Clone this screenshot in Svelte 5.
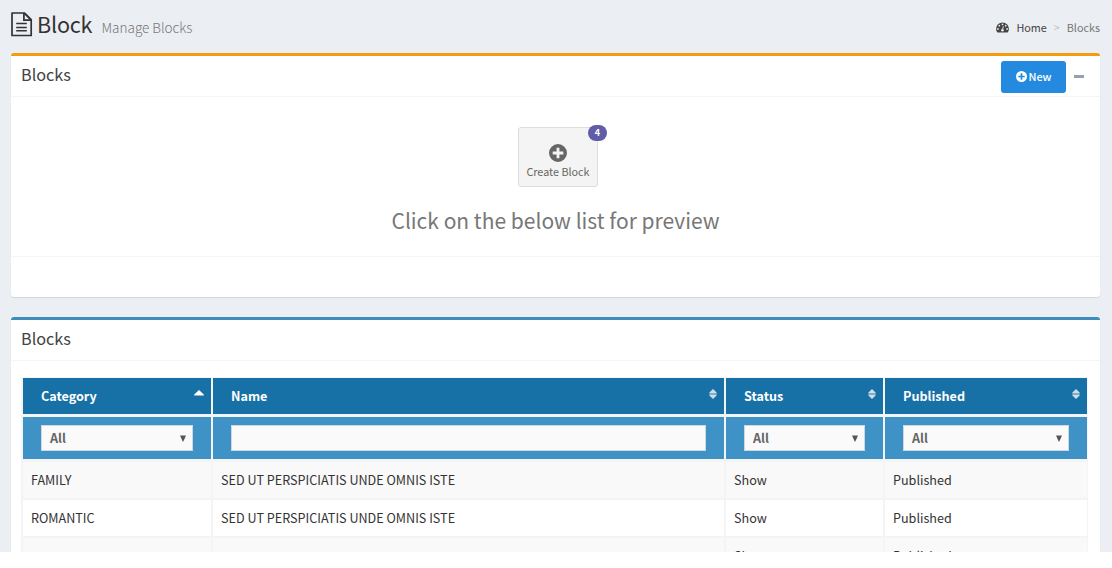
<script>
  const columns = [
    { label: 'Category', sort: 'asc', filter: 'select' },
    { label: 'Name', sort: 'both', filter: 'text' },
    { label: 'Status', sort: 'both', filter: 'select' },
    { label: 'Published', sort: 'both', filter: 'select' }
  ];
  const rows = [
    ['FAMILY', 'SED UT PERSPICIATIS UNDE OMNIS ISTE', 'Show', 'Published'],
    ['ROMANTIC', 'SED UT PERSPICIATIS UNDE OMNIS ISTE', 'Show', 'Published'],
    ['', '', 'Show', 'Published']
  ];
</script>

{#snippet plusCircle(size)}
  <svg width={size} height={size} viewBox="0 0 18 18" aria-hidden="true">
    <path fill="currentColor" fill-rule="evenodd" d="M9 0a9 9 0 1 0 0 18A9 9 0 0 0 9 0zM7.6 3.7h2.8v3.9h3.9v2.8h-3.9v3.9H7.6v-3.9H3.7V7.6h3.9z" />
  </svg>
{/snippet}

<div class="page">
  <header class="top">
    <h1>
      <svg class="doc" width="22" height="25" viewBox="0 0 22 25" fill="none" stroke="#333" stroke-width="1.7">
        <path d="M1 1h12.6L20.2 7.6V23.5H1z" stroke-linejoin="round" />
        <path d="M12.9 1v7.2h7.2" stroke-width="1.7" />
        <path d="M13.5 1.5l6 6" stroke-width="1.6" />
        <path d="M5.2 11.5h10.6M5.2 15.5h10.6M5.2 18.8h10.6" stroke-width="1.4" />
      </svg>
      <span class="title">Block</span>
      <small>Manage Blocks</small>
    </h1>
    <nav>
      <svg width="13" height="11" viewBox="0 0 13 11">
        <path fill="#444" d="M6.5.4A6.4 6.4 0 0 0 .1 6.8c0 1.2.3 2.3.9 3.3.1.2.3.3.5.3h10c.2 0 .4-.1.5-.3.6-1 .9-2.1.9-3.3A6.4 6.4 0 0 0 6.5.4z" />
        <g fill="#ebeef3"><circle cx="1.9" cy="6.9" r=".9" /><circle cx="3.3" cy="3.7" r=".9" /><circle cx="6.5" cy="2.3" r=".9" /><circle cx="9.7" cy="3.7" r=".9" /><circle cx="11.1" cy="6.9" r=".9" /></g>
        <path d="M7.4 4.2L6.6 7.6" stroke="#ebeef3" stroke-width=".9" />
        <circle cx="6.4" cy="8.3" r="1.3" fill="#ebeef3" />
      </svg>
      <span class="home">Home</span>
      <span class="sep">&gt;</span>
      <span class="here">Blocks</span>
    </nav>
  </header>

  <section class="box warning">
    <div class="box-header">
      <h3>Blocks</h3>
      <div class="tools">
        <button class="new">{@render plusCircle(11)}<span>New</span></button>
        <span class="minus"></span>
      </div>
    </div>
    <div class="intro">
      <button class="app">
        <span class="badge">4</span>
        {@render plusCircle(18)}
        <span class="app-label">Create Block</span>
      </button>
      <p>Click on the below list for preview</p>
    </div>
    <div class="box-footer"></div>
  </section>

  <section class="box primary">
    <div class="box-header"><h3>Blocks</h3></div>
    <div class="table">
      {#each columns as c}
        <div class="th">
          <span>{c.label}</span>
          {#if c.sort === 'asc'}
            <svg class="asc" width="10" height="6" viewBox="0 0 10 6"><path fill="#fff" d="M5 0l4.8 4.6V5.5H.2v-.9z" /></svg>
          {:else}
            <svg class="both" width="8" height="10" viewBox="0 0 8 10"><path fill="#d0dde6" d="M4 0l3.6 3.6v.9H.4v-.9z M.4 5.5h7.2v.9L4 10 .4 6.4z" /><path fill="#8fb4cd" d="M.4 4.5h7.2v1H.4z" /></svg>
          {/if}
        </div>
      {/each}
      {#each columns as c}
        <div class="filter">
          <div class="field">
            {#if c.filter === 'select'}
              <span>All</span>
              <svg width="6" height="7" viewBox="0 0 6 7"><path fill="#555" d="M0 .5h6L3.3 6.5h-.6z" /></svg>
            {/if}
          </div>
        </div>
      {/each}
      {#each rows as row, i}
        {#each row as cell}
          <div class="td" class:odd={i % 2 === 0}><span>{cell}</span></div>
        {/each}
      {/each}
    </div>
  </section>
</div>

<style>
  :global(body) { margin: 0; background: #fff; }
  .page, .page * { box-sizing: border-box; }
  .page {
    width: 1112px; height: 552px; overflow: hidden; padding: 0 12px 0 11px;
    background: #ebeef3; color: #333; font: 12.6px/20px "Noto Sans CJK SC", sans-serif;
  }
  h1, h3, p { margin: 0; font-weight: 400; }
  button { font: inherit; margin: 0; }
  svg { display: block; flex: none; }
  .top { height: 53px; display: flex; justify-content: space-between; }
  h1 { display: flex; align-items: flex-start; line-height: 30px; }
  .doc { margin-top: 12px; }
  .title { font-size: 21.6px; letter-spacing: -.2px; width: 55px; margin: 9px 0 0 4px; }
  small { font-size: 13.5px; font-weight: 300; color: #777; margin: 12px 0 0 9.5px; }
  nav { display: flex; align-items: center; height: 20px; margin-top: 17px; font-size: 10.8px; color: #444; }
  nav svg { margin-top: 1px; }
  .home { margin-left: 7px; }
  .sep { margin: 0 7px; color: #bbb; font-size: 10.8px; }
  .here { color: #777; }
  .box { width: 1089px; background: #fff; border-top: 3px solid; border-radius: 3px; box-shadow: 0 1px 1px rgba(0,0,0,.1); }
  .warning { height: 244px; border-top-color: #f39c12; margin-bottom: 20px; }
  .primary { height: 300px; border-top-color: #3c8dbc; }
  .box-header { height: 41px; border-bottom: 1px solid #f4f4f4; padding: 0 16px 0 10px; display: flex; justify-content: space-between; }
  h3 { font-size: 16.2px; line-height: 36px; color: #444; }
  .tools { display: flex; gap: 8px; align-items: center; height: 32px; margin-top: 5px; }
  .new { width: 65px; height: 32px; border: 0; border-radius: 3px; background: #238ae0; color: #fff; display: flex; align-items: center; justify-content: center; gap: 2px; padding: 0 0 2px; font-size: 10.8px; font-weight: 500; }
  .new svg { margin-top: 1px; }
  .minus { width: 10px; height: 3px; margin-bottom: 2px; background: #97a0b3; }
  .intro { height: 160px; padding-top: 30px; border-bottom: 1px solid #f4f4f4; display: flex; flex-direction: column; align-items: center; }
  .app { position: relative; width: 80px; height: 60px; margin-left: 5px; border: 1px solid #ddd; border-radius: 3px; background: #f4f4f4; color: #666; padding: 16px 0 0; display: flex; flex-direction: column; align-items: center; }
  .app-label { font-size: 10.8px; line-height: 18px; white-space: nowrap; }
  .badge { position: absolute; top: -3px; right: -10px; width: 19px; height: 16px; border-radius: 8px; background: #605ca8; color: #fff; font-size: 9px; font-weight: 700; line-height: 15px; text-align: center; }
  p { font-size: 21px; line-height: 30px; margin-top: 18px; color: #777; }
  .table { display: grid; grid-template-columns: 188px 511px 157px 202px; grid-template-rows: 36px 42px 36px 36px 36px; column-gap: 2px; row-gap: 2px; width: 1067px; margin: 16px 0 0 10px; padding: 1px 1px 2px 2px; background: #f4f4f4; }
  .th { display: flex; justify-content: space-between; align-items: flex-start; background: #1770a6; color: #fff; font-weight: 700; padding: 0 7px 0 18px; line-height: 36px; }
  .asc { margin-top: 12px; }
  .both { margin: 11px 0 0 0; }
  .filter { background: #3e92c5; padding: 8px 18px; margin: 1px 0 -1px; }
  .field { height: 26px; border: 1px solid #d2d6de; background: #fafafa; display: flex; align-items: center; justify-content: space-between; padding: 0 6px 0 8px; color: #666; font-weight: 700; }
  .td { background: #fff; padding-left: 8px; line-height: 36px; white-space: nowrap; margin: 2px 0 -2px; }
  .odd { background: #f9f9f9; }
</style>
